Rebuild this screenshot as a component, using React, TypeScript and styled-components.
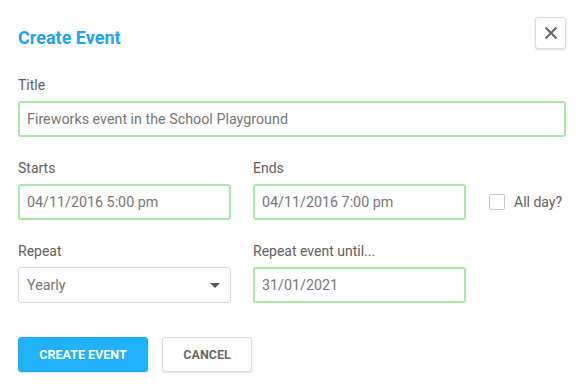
import styled, { createGlobalStyle } from "styled-components";

const GlobalStyle = createGlobalStyle`
  html, body {
    margin: 0;
    background: #ffffff;
  }
  body {
    font-family: Roboto, "Liberation Sans", sans-serif;
  }
`;

const Panel = styled.div`
  box-sizing: border-box;
  width: 583px;
  padding: 17px 17px 18px 18px;
`;

const Header = styled.div`
  display: flex;
  justify-content: space-between;
  align-items: flex-start;
  margin-bottom: 28px;
`;

const Heading = styled.h1`
  margin: 10px 0 0;
  font-size: 18px;
  line-height: 21px;
  font-weight: 700;
  color: #1fa3f2;
`;

const CloseButton = styled.button`
  display: flex;
  align-items: center;
  justify-content: center;
  width: 31px;
  height: 32px;
  padding: 0;
  background: #ffffff;
  border: 1px solid #dcdcdc;
  border-radius: 3px;
  box-shadow: 0 1px 2px rgba(0, 0, 0, 0.12);
  cursor: pointer;
`;

const Grid = styled.div`
  display: grid;
  grid-template-columns: 213px 213px 1fr;
  column-gap: 22px;
  row-gap: 23px;
`;

const Field = styled.div<{ $span?: number }>`
  display: flex;
  flex-direction: column;
  gap: 7px;
  grid-column: span ${({ $span }) => $span || 1};
`;

const Label = styled.label`
  font-size: 14px;
  line-height: 17px;
  color: #606060;
`;

const Input = styled.input`
  box-sizing: border-box;
  width: 100%;
  height: 36px;
  padding: 0 7px;
  font-family: inherit;
  font-size: 14.3px;
  color: #777777;
  background: #ffffff;
  border: 2px solid #a8e9a8;
  border-radius: 3px;
  outline: none;
`;

const SelectBox = styled.div`
  box-sizing: border-box;
  display: flex;
  align-items: center;
  justify-content: space-between;
  height: 36px;
  padding: 0 10px 0 8px;
  font-size: 14.3px;
  color: #777777;
  border: 1px solid #dadada;
  border-radius: 3px;
`;

const Caret = styled.span`
  width: 0;
  height: 0;
  border-left: 5px solid transparent;
  border-right: 5px solid transparent;
  border-top: 5px solid #555555;
`;

const CheckField = styled.label`
  display: flex;
  align-items: center;
  gap: 9px;
  align-self: end;
  height: 36px;
  margin-left: 1px;
  font-size: 14px;
  color: #606060;
`;

const Box = styled.span`
  box-sizing: border-box;
  width: 16px;
  height: 16px;
  border: 1px solid #c8c8c8;
  border-radius: 2px;
  background: #ffffff;
`;

const Actions = styled.div`
  display: flex;
  gap: 14px;
  margin-top: 34px;
`;

const Button = styled.button<{ $primary?: boolean }>`
  height: 35px;
  padding: 0;
  width: ${({ $primary }) => ($primary ? "130px" : "90px")};
  font-family: inherit;
  font-size: 12.5px;
  font-weight: 700;
  text-transform: uppercase;
  color: ${({ $primary }) => ($primary ? "#ffffff" : "#6a6a6a")};
  background: ${({ $primary }) => ($primary ? "#22b1fc" : "#ffffff")};
  border: 1px solid ${({ $primary }) => ($primary ? "#1ea9f3" : "#dcdcdc")};
  border-radius: 3px;
  box-shadow: 0 1px 2px rgba(0, 0, 0, 0.1);
  cursor: pointer;
`;

const CloseIcon = () => (
  <svg width="14" height="14" viewBox="0 0 14 14">
    <path d="M1.5 1.5 L12.5 12.5 M12.5 1.5 L1.5 12.5" stroke="#666666" strokeWidth="2" strokeLinecap="butt" />
  </svg>
);

export default function App() {
  return (
    <Panel>
      <GlobalStyle />
      <Header>
        <Heading>Create Event</Heading>
        <CloseButton aria-label="Close">
          <CloseIcon />
        </CloseButton>
      </Header>
      <Grid>
        <Field $span={3}>
          <Label>Title</Label>
          <Input defaultValue="Fireworks event in the School Playground" />
        </Field>
        <Field>
          <Label>Starts</Label>
          <Input defaultValue="04/11/2016 5:00 pm" />
        </Field>
        <Field>
          <Label>Ends</Label>
          <Input defaultValue="04/11/2016 7:00 pm" />
        </Field>
        <CheckField>
          <Box />
          All day?
        </CheckField>
        <Field>
          <Label>Repeat</Label>
          <SelectBox>
            Yearly
            <Caret />
          </SelectBox>
        </Field>
        <Field>
          <Label>Repeat event until...</Label>
          <Input defaultValue="31/01/2021" />
        </Field>
      </Grid>
      <Actions>
        <Button $primary>Create Event</Button>
        <Button>Cancel</Button>
      </Actions>
    </Panel>
  );
}
